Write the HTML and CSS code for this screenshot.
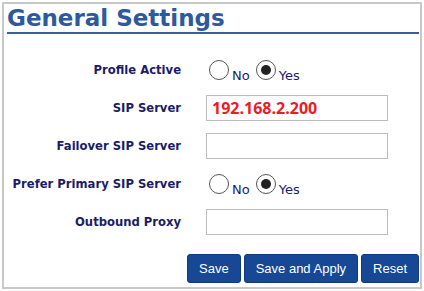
FILE: index.html
```html
<!DOCTYPE html>
<html lang="en">
<head>
    <meta charset="UTF-8">
    <meta name="viewport" content="width=device-width, initial-scale=1.0">
    <title>General Settings</title>
    <link rel="stylesheet" href="styles.css">
</head>
<body>
    <div class="panel">
        <h1 class="title">General Settings</h1>

        <div class="settings">
            <label class="label">Profile Active</label>
            <div class="choice">
                <span class="radio"></span><span class="opt">No</span>
                <span class="radio checked"></span><span class="opt">Yes</span>
            </div>

            <label class="label">SIP Server</label>
            <input class="field ip" type="text" value="192.168.2.200">

            <label class="label">Failover SIP Server</label>
            <input class="field" type="text" value="">

            <label class="label">Prefer Primary SIP Server</label>
            <div class="choice">
                <span class="radio"></span><span class="opt">No</span>
                <span class="radio checked"></span><span class="opt">Yes</span>
            </div>

            <label class="label">Outbound Proxy</label>
            <input class="field" type="text" value="">
        </div>

        <div class="actions">
            <button class="btn">Save</button>
            <button class="btn">Save and Apply</button>
            <button class="btn">Reset</button>
        </div>
    </div>
</body>
</html>
```

FILE: styles.css
```css
body {
    margin: 0;
    font-family: "DejaVu Sans", Verdana, sans-serif;
    background-color: white;
}
.panel {
    margin: 2px;
    border: 2px solid #c8c8c8;
    height: 287px;
    box-sizing: border-box;
    display: flex;
    flex-direction: column;
}
.title {
    margin: 0 1px 0 3px;
    padding-top: 2px;
    font-size: 23px;
    line-height: 25px;
    color: #2d5a9e;
    border-bottom: 2px solid #3c5f9c;
    height: 26px;
}
.settings {
    display: grid;
    grid-template-columns: 177px 182px;
    column-gap: 25px;
    row-gap: 12px;
    align-items: center;
    margin-top: 23px;
}
.label {
    text-align: right;
    font-weight: bold;
    font-size: 11.6px;
    color: #1c1c66;
}
.choice {
    display: flex;
    align-items: flex-end;
    height: 26px;
    margin-left: 3px;
}
.radio {
    width: 20px;
    height: 20px;
    border: 1px solid #555;
    border-radius: 50%;
    box-sizing: border-box;
    position: relative;
    margin-bottom: 3px;
    background: white;
}
.radio.checked::after {
    content: "";
    position: absolute;
    left: 4px;
    top: 4px;
    width: 10px;
    height: 10px;
    border-radius: 50%;
    background: #222;
}
.opt {
    font-size: 13px;
    color: #1c1c66;
    margin: 0 6px 0 3px;
    line-height: 15px;
}
.field {
    height: 26px;
    box-sizing: border-box;
    border: 1px solid #bcbcbc;
    padding: 0 5px;
    font-family: "Open Sans", "DejaVu Sans", sans-serif;
    font-size: 16px;
    font-weight: bold;
    color: #ec1c24;
    outline: none;
}
.actions {
    display: flex;
    justify-content: flex-end;
    gap: 3px;
    margin-top: auto;
    margin-right: 1px;
    margin-bottom: 4px;
}
.btn {
    height: 29px;
    padding: 0 11px;
    background-color: #164896;
    color: white;
    border: 1px solid #0f3a7c;
    border-radius: 3px;
    font-family: "Liberation Sans", Arial, sans-serif;
    font-size: 13px;
}
```
